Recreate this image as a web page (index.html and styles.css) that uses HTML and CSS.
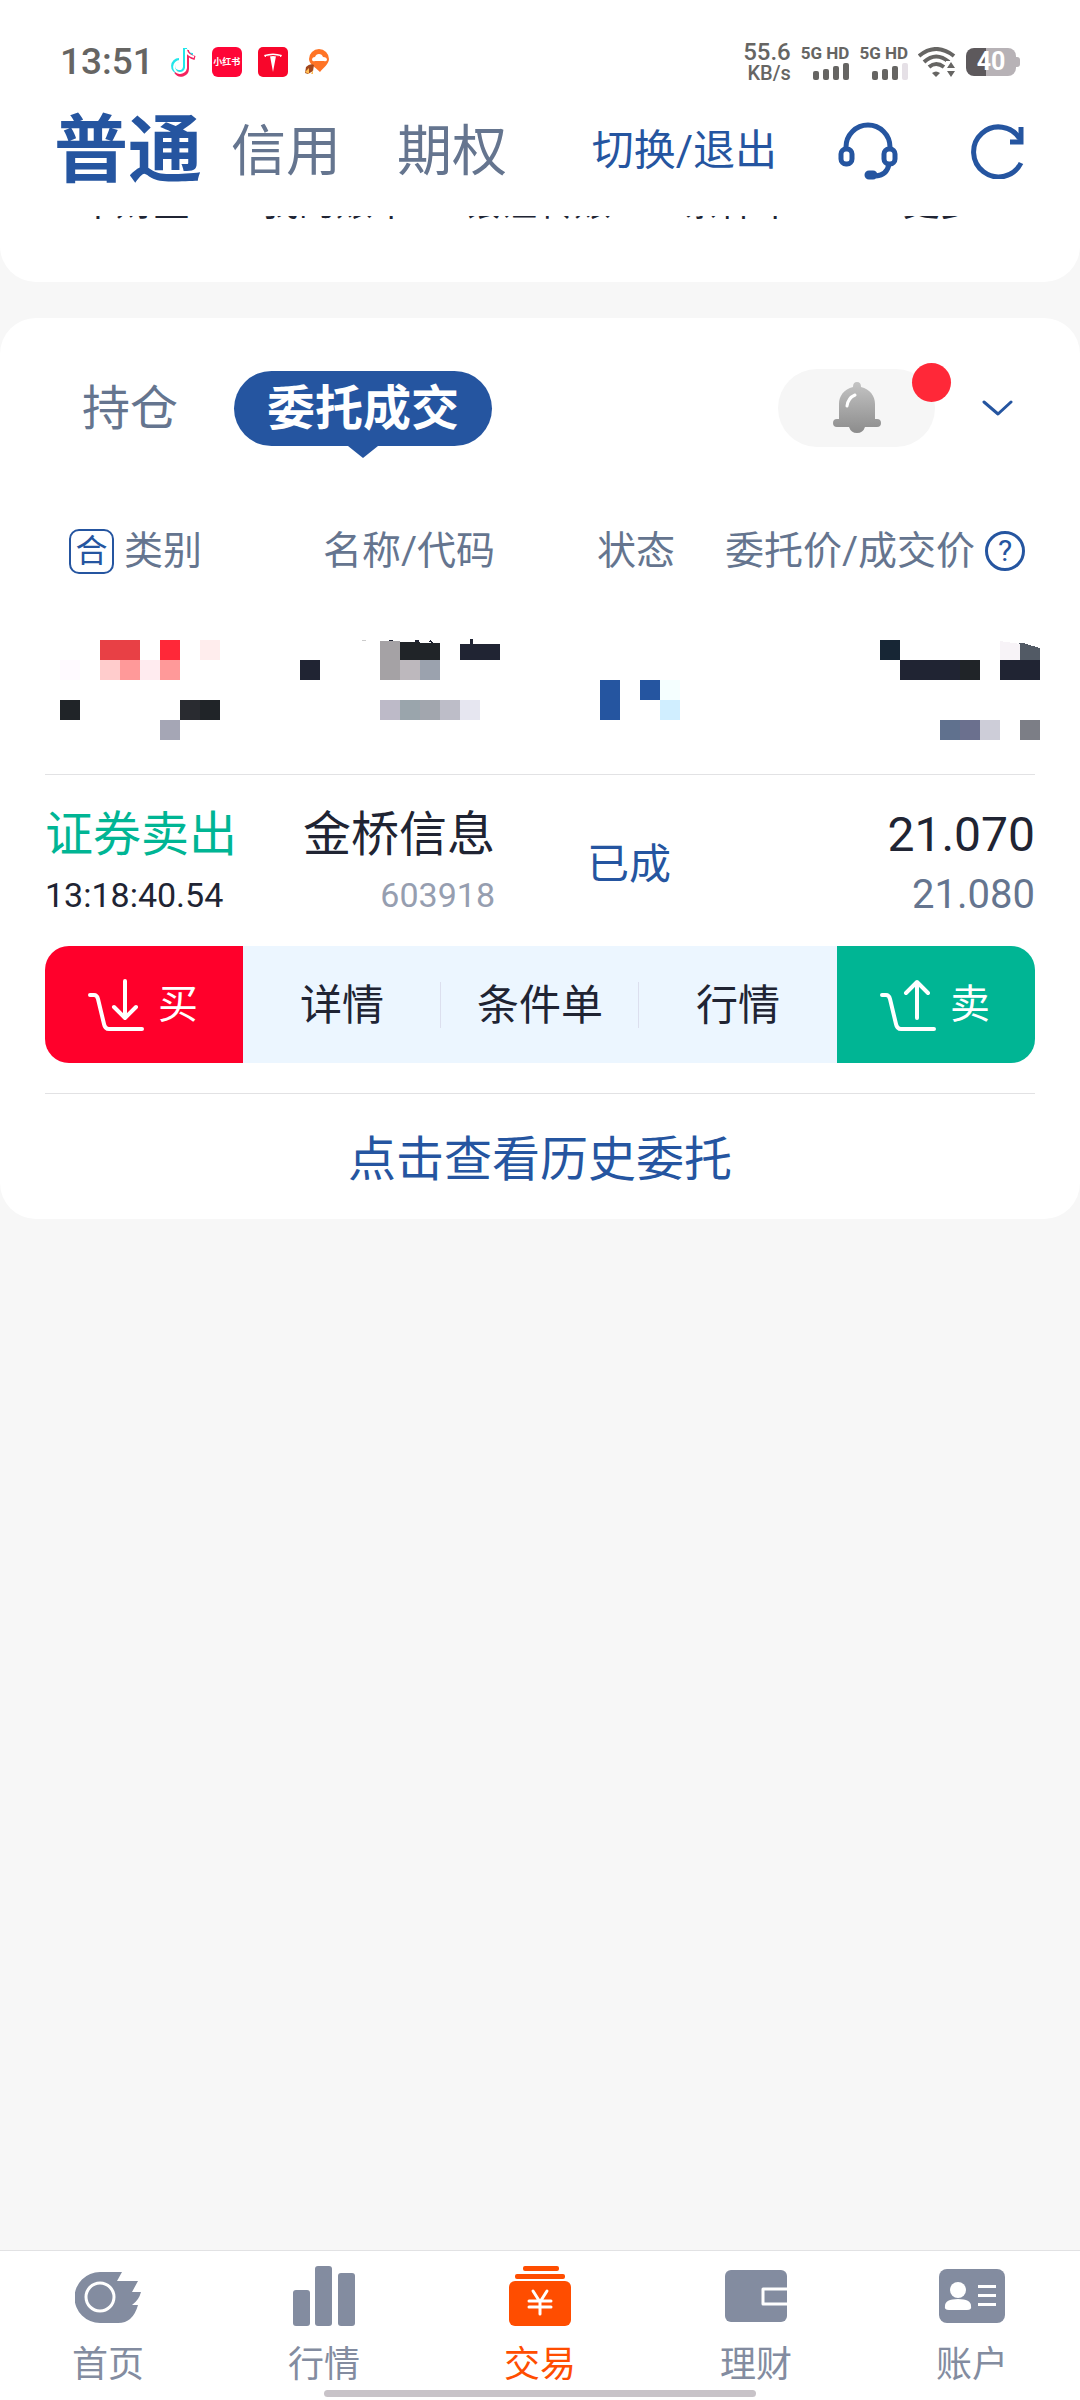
FILE: index.html
```html
<!DOCTYPE html>
<html lang="zh-CN">
<head>
<meta charset="utf-8">
<meta name="viewport" content="width=device-width, initial-scale=1">
<title>委托成交</title>
<link rel="stylesheet" href="styles.css">
</head>
<body>
<header class="top">
  <div class="status-bar">
    <span class="clock">13:51</span>
    <div class="apps">
      <svg class="app-note" viewBox="0 0 26 30" aria-hidden="true">
        <g fill="none" stroke-width="4">
          <path stroke="#22e6ea" d="M15 1v19a6 6 0 1 1-6-7M15 2c1 4 4 6 8 6"/>
          <path stroke="#f5225f" d="M17 3v19a6 6 0 0 1-11 3M17 4c1 4 4 6 8 7"/>
          <path stroke="#fff" stroke-width="2" d="M16 2v19a6 6 0 1 1-6-7M16 3c1 4 4 6 8 7"/>
        </g>
      </svg>
      <span class="app-red">小红书</span>
      <svg class="app-t" viewBox="0 0 30 30" aria-hidden="true">
        <rect width="30" height="30" rx="5" fill="#f8062b"/>
        <path fill="#fff" d="M6 8q9-3 18 0l-1 2-5-1-3 16-3-16-5 1z"/>
        <path d="M8 9.500q7-2 14 0" stroke="#f8062b" fill="none"/>
      </svg>
      <svg class="app-pin" viewBox="0 0 26 28" aria-hidden="true">
        <path fill="#ff7426" d="M15 1a10 10 0 0 1 10 10c0 5-6 9-9 13-5-5-11-8-11-13A10 10 0 0 1 15 1z"/>
        <path fill="#fff" d="M8 12q0-3 3-3 1-3 4-3t4 3q4 0 4 3-1 2-3 1H11q-2 1-3-1z"/>
        <path fill="#a2461c" d="M2 19q4-4 8-2l-1 6-5 3-3-1z"/>
        <path fill="#ffbd55" d="M1 24l4-4v6zM7 26l2-4v4z"/>
      </svg>
    </div>
    <div class="signals">
      <div class="speed"><span>55.6</span><span class="unit">KB/s</span></div>
      <div class="sim"><span>5G HD</span>
        <svg viewBox="0 0 36 17" aria-hidden="true"><g fill="#666563"><rect y="8" width="6" height="9" rx="2"/><rect x="10" y="6" width="6" height="11" rx="2"/><rect x="20" y="3" width="6" height="14" rx="2"/><rect x="30" width="6" height="17" rx="2"/></g></svg>
      </div>
      <div class="sim"><span>5G HD</span>
        <svg viewBox="0 0 36 17" aria-hidden="true"><g fill="#666563"><rect y="8" width="6" height="9" rx="2"/><rect x="10" y="6" width="6" height="11" rx="2"/><rect x="20" y="3" width="6" height="14" rx="2"/></g><rect x="30" width="6" height="17" rx="2" fill="#e5e0e6"/></svg>
      </div>
      <svg class="wifi" viewBox="0 0 38 30" aria-hidden="true">
        <g fill="none" stroke="#666563" stroke-width="4"><path d="M1 9q17-14 35 0"/><path d="M6 15q12-11 25 0"/><path d="M11 20q7-6 15 0"/></g>
        <path fill="#666563" d="M14 26q4-3 8 0l-4 4z"/>
        <path fill="#fff" d="M28 14h10v16H28z"/><path fill="#666563" d="M33 15l4 6h-8zM33 30l4-6h-8z"/>
      </svg>
      <div class="battery"><span>40</span></div>
    </div>
  </div>
  <nav class="account-nav">
    <div class="account-tabs">
      <button class="account-tab active" type="button">普通</button>
      <button class="account-tab" type="button">信用</button>
      <button class="account-tab" type="button">期权</button>
    </div>
    <div class="account-tools">
      <button class="switch" type="button">切换/退出</button>
      <button class="icon-btn" type="button" aria-label="客服">
        <svg width="60" height="58" viewBox="0 0 60 58" fill="none" stroke="#2555a0" stroke-width="5">
          <path d="M8 27v-2a22 22 0 0 1 44 0v2M51 42q-2 11-13 12"/>
          <rect x="3" y="27" width="11" height="15" rx="5"/><rect x="46" y="27" width="11" height="15" rx="5"/>
          <rect x="29" y="51" width="8" height="4" rx="2"/>
        </svg>
      </button>
      <button class="icon-btn refresh" type="button" aria-label="刷新">
        <svg width="55" height="55" viewBox="0 0 55 55" fill="none" stroke="#2555a0" stroke-width="5">
          <path d="M50 39A25 25 0 1 1 49 15"/><path d="M50 3v15H39"/>
        </svg>
      </button>
    </div>
  </nav>
</header>

<main class="content">
  <section class="shortcuts">
    <a href="#">牛财宝</a><a href="#">我的账单</a><a href="#">银证转账</a><a href="#">条件单</a><a href="#">更多</a>
  </section>

  <section class="orders">
    <div class="order-tabs">
      <button class="order-tab" type="button">持仓</button>
      <button class="order-tab active" type="button">委托成交</button>
      <button class="bell" type="button" aria-label="通知">
        <svg width="48" height="52" viewBox="0 0 48 52">
          <defs><linearGradient id="metal" x1="0" y1="0" x2="0" y2="1"><stop offset="0" stop-color="#c4c4c4"/><stop offset="1" stop-color="#8c8c8c"/></linearGradient></defs>
          <path fill="url(#metal)" d="M24 0q4 0 4 5c9 2 14 9 14 17v15h2q4 0 4 4t-4 4H32q-2 6-8 6t-8-6H4q-4 0-4-4t4-4h2V22C6 14 11 7 20 5q0-5 4-5z"/>
          <path d="M14 24q1-8 8-11" fill="none" stroke="#fff" stroke-width="3" stroke-linecap="round"/>
        </svg>
        <span class="dot"></span>
      </button>
      <button class="icon-btn" type="button" aria-label="展开">
        <svg width="31" height="18" viewBox="0 0 31 18" fill="none" stroke="#2555a0" stroke-width="3" stroke-linecap="round" stroke-linejoin="round"><path d="M2 3l14 12L29 3"/></svg>
      </button>
    </div>

    <table class="order-table">
      <colgroup><col class="c-kind"><col><col class="c-state"><col class="c-price"></colgroup>
      <thead>
        <tr>
          <th class="kind"><span class="head"><span class="merge">合</span>类别</span></th>
          <th>名称/代码</th>
          <th>状态</th>
          <th class="price"><span class="head">委托价/成交价<button class="help" type="button">?</button></span></th>
        </tr>
      </thead>
      <tbody>
        <tr class="masked">
          <td colspan="4">
            <svg viewBox="45 640 990 100" shape-rendering="crispEdges" aria-label="已隐藏的委托">
              <path fill="#e84045" d="M100 640h40v20h-40z"/><path fill="#ff2838" d="M160 640h20v20h-20z"/><path fill="#ffeded" d="M200 640h20v20h-20z"/>
              <path fill="#fffaff" d="M60 660h20v20H60z"/><path fill="#ffcccc" d="M100 660h20v20h-20z"/><path fill="#ff9999" d="M120 660h20v20h-20zM160 660h20v20h-20z"/><path fill="#ffebef" d="M140 660h20v20h-20z"/>
              <path fill="#202428" d="M60 700h20v20H60zM200 700h20v20h-20z"/><path fill="#292b30" d="M180 700h20v20h-20z"/><path fill="#a5a6b5" d="M160 720h20v20h-20z"/>
              <path fill="#202433" d="M300 660h20v20h-20zM460 644h40v16h-40zM470 639h3v5h-3zM415 640h4v3h-4zM389 640h4v1h-4zM428 642l2-2 4 3z"/>
              <path fill="#a5a2a5" d="M380 641h20v39h-20z"/><path fill="#202428" d="M400 642l40 1v17h-40z"/><path fill="#bdb8bd" d="M400 660h20v20h-20z"/><path fill="#9ba2ae" d="M420 660h20v20h-20z"/>
              <path fill="#ccc" d="M362 640h4v1h-4z"/>
              <path fill="#bdbac8" d="M380 700h20v20h-20z"/><path fill="#9aa5ac" d="M400 700h20v20h-20z"/><path fill="#a2a6ae" d="M420 700h20v20h-20z"/><path fill="#bdbdc8" d="M440 700h20v20h-20z"/><path fill="#e6e6f0" d="M460 700h20v20h-20z"/>
              <path fill="#2555a0" d="M600 680h20v40h-20zM640 680h20v20h-20z"/><path fill="#f5ffff" d="M660 680h20v20h-20z"/><path fill="#d0eeff" d="M660 700h20v20h-20z"/>
              <path fill="#172635" d="M880 640h20v20h-20z"/><path fill="#202433" d="M900 660h60v20h-60zM1000 660h40v20h-40z"/><path fill="#202428" d="M960 660h20v20h-20z"/>
              <path fill="#f7f3f7" d="M1000 641l20 3v16h-20z"/><path fill="#525a65" d="M1017 643h6l17 5v12h-20v-16z"/>
              <path fill="#60718e" d="M940 720h20v20h-20z"/><path fill="#6b708e" d="M960 720h20v20h-20z"/><path fill="#cdcdd8" d="M980 720h20v20h-20z"/><path fill="#7c7e86" d="M1020 720h20v20h-20z"/>
            </svg>
          </td>
        </tr>
        <tr class="order">
          <td class="kind"><div class="main sell-text">证券卖出</div><div class="sub">13:18:40.54</div></td>
          <td><div class="main">金桥信息</div><div class="sub code">603918</div></td>
          <td class="state">已成</td>
          <td><div class="main number">21.070</div><div class="sub deal">21.080</div></td>
        </tr>
        <tr class="order-actions">
          <td colspan="4">
            <div class="actions">
              <button class="buy" type="button">
                <svg width="56" height="52" viewBox="0 0 56 52"><path d="M2 16h4q3 0 4 4l6 25q1 5 5 5h33M37 2v37M26 28l11 11 11-11"/></svg>买</button>
              <button class="split" type="button">详情</button>
              <button class="split" type="button">条件单</button>
              <button type="button">行情</button>
              <button class="sell" type="button">
                <svg width="56" height="52" viewBox="0 0 56 52"><path d="M2 16h4q3 0 4 4l6 25q1 5 5 5h33M37 39V3M26 14L37 3l11 11"/></svg>卖</button>
            </div>
          </td>
        </tr>
      </tbody>
    </table>
    <a class="history" href="#">点击查看历史委托</a>
  </section>
</main>

<footer class="bottom">
  <nav class="tab-bar">
    <a href="#">
      <svg width="66" height="60" viewBox="0 0 66 60"><path fill="#838ca0" d="M25 6h22l-5 9h21l-6 11h9q-2 8-9 13h6q-5 18-20 18H25A25 25 0 0 1 25 6z"/><circle cx="25" cy="31" r="14" fill="none" stroke="#fff" stroke-width="3"/></svg>
      首页</a>
    <a href="#">
      <svg width="66" height="60" viewBox="0 0 66 60" fill="#838ca0"><rect x="2" y="24" width="17" height="36" rx="3"/><rect x="24" width="17" height="60" rx="3"/><rect x="47" y="7" width="17" height="53" rx="3"/></svg>
      行情</a>
    <a class="current" href="#">
      <svg width="66" height="60" viewBox="0 0 66 60" fill="#ff4d00"><rect x="16" width="36" height="5" rx="2"/><rect x="8" y="8" width="50" height="5" rx="2"/><rect x="2" y="15" width="62" height="45" rx="6"/><path fill="none" stroke="#fff" stroke-width="3" stroke-linecap="round" d="M26 25l7 11 7-11M22 35h22M22 41h22M33 36v12"/></svg>
      交易</a>
    <a href="#">
      <svg width="66" height="60" viewBox="0 0 66 60"><rect x="2" y="4" width="62" height="52" rx="6" fill="#838ca0"/><path fill="none" stroke="#fff" stroke-width="3" stroke-linejoin="round" d="M66 23H40v15h26"/></svg>
      理财</a>
    <a href="#">
      <svg width="66" height="60" viewBox="0 0 66 60"><rect y="3" width="66" height="54" rx="8" fill="#838ca0"/><g fill="#fff"><circle cx="19" cy="24" r="8"/><path d="M6 40q0-7 13-7t13 7q1 4-4 4H10q-5 0-4-4z"/><rect x="39" y="19" width="18" height="3"/><rect x="39" y="28" width="18" height="3"/><rect x="39" y="37" width="18" height="3"/></g></svg>
      账户</a>
  </nav>
  <div class="home-indicator"></div>
</footer>
</body>
</html>
```
FILE: styles.css
```css
* { box-sizing: border-box; }

body {
  margin: 0;
  min-height: 100vh;
  display: flex;
  flex-direction: column;
  background: #f7f7f7;
  color: #202433;
  font-family: Roboto, "Noto Sans CJK SC", sans-serif;
}

button {
  margin: 0;
  padding: 0;
  border: 0;
  background: none;
  color: inherit;
  font: inherit;
}

a { color: inherit; text-decoration: none; }
svg { display: block; }

/* Status bar */
.top { background: #fff; }

.status-bar {
  display: flex;
  align-items: center;
  height: 102px;
  padding: 22px 64px 0 60px;
  color: #666563;
}

.clock { font-size: 37px; font-weight: 500; line-height: 40px; }

.apps { display: flex; align-items: center; gap: 16px; margin-left: 16px; }
.app-note { width: 26px; height: 30px; }
.app-t { width: 30px; height: 30px; }
.app-pin { width: 26px; height: 28px; }
.app-red {
  width: 30px;
  border-radius: 6px;
  background: #ff0537;
  color: #fff;
  font-size: 9px;
  font-weight: 700;
  line-height: 30px;
  text-align: center;
}

.signals { display: flex; align-items: center; gap: 10px; margin-left: auto; font-weight: 500; }
.speed { display: flex; flex-direction: column; align-items: flex-end; font-size: 24px; line-height: 22px; }
.unit { font-size: 20px; line-height: 20px; }
.sim { display: flex; flex-direction: column; align-items: flex-end; gap: 2px; font-size: 17px; font-weight: 700; line-height: 16px; }
.sim svg { width: 36px; height: 17px; }
.wifi { width: 38px; height: 30px; }
.battery {
  position: relative;
  width: 50px;
  border-radius: 8px;
  background: linear-gradient(90deg, #5d595c 40%, #b7b2b6 40%);
  color: #fff;
  font-size: 25px;
  font-weight: 700;
  line-height: 28px;
  text-align: center;
}
.battery::after {
  content: "";
  position: absolute;
  top: 9px;
  right: -4px;
  width: 4px;
  height: 10px;
  border-radius: 0 3px 3px 0;
  background: #b7b2b6;
}

/* Account switcher */
.account-nav {
  display: flex;
  align-items: center;
  justify-content: space-between;
  height: 114px;
  padding: 0 54px 16px;
}
.account-tabs { display: flex; align-items: center; gap: 2px; }
.account-tab { padding: 0 27px; color: #65758f; font-size: 55px; line-height: 80px; }
.account-tab.active { padding: 0; color: #2555a0; font-size: 74px; font-weight: 700; }
.account-tools { display: flex; align-items: center; gap: 61px; }
.switch { color: #2555a0; font-size: 42px; line-height: 56px; }
.refresh { padding-left: 12px; }

/* Shortcuts, scrolled up under the header */
.content { flex: 1; }
.shortcuts {
  display: grid;
  grid-template-columns: repeat(5, 1fr);
  height: 66px;
  padding: 0 40px 0 34px;
  overflow: hidden;
  border-radius: 0 0 36px 36px;
  background: #fff;
  font-size: 37px;
  line-height: 40px;
  text-align: center;
}
.shortcuts a { margin-top: -32px; }

/* Orders card */
.orders {
  margin-top: 36px;
  padding: 51px 45px 31px;
  border-radius: 36px;
  background: #fff;
}
.order-tabs { display: flex; align-items: center; height: 78px; padding: 0 22px 0 37px; }
.order-tab { color: #65758f; font-size: 48px; line-height: 75px; }
.order-tab.active {
  position: relative;
  margin-left: 56px;
  padding: 0 33px;
  border-radius: 38px;
  background: #2555a0;
  color: #fff;
  font-weight: 700;
}
.order-tab.active::after {
  content: "";
  position: absolute;
  top: 100%;
  left: 50%;
  margin-left: -15px;
  border: 15px solid transparent;
  border-top: 12px solid #2555a0;
  border-bottom: 0;
}
.bell {
  position: relative;
  display: grid;
  place-items: center;
  width: 157px;
  height: 78px;
  margin: 0 47px 0 auto;
  border-radius: 39px;
  background: #f6f6f6;
}
.dot {
  position: absolute;
  top: -6px;
  right: -16px;
  width: 39px;
  height: 39px;
  border-radius: 50%;
  background: #ff2838;
}

.order-table { width: 100%; margin-top: 74px; border-collapse: collapse; table-layout: fixed; }
.c-kind { width: 225px; }
.c-state { width: 180px; }
.c-price { width: 360px; }
.order-table th, .order-table td { padding: 0; font-weight: 400; text-align: right; vertical-align: top; white-space: nowrap; }
.order-table th { height: 60px; color: #65758f; font-size: 39px; line-height: 60px; }
.order-table .kind { text-align: left; }
.order-table th.kind { padding-left: 24px; }
.order-table th.price { padding-right: 10px; }
.head { display: inline-flex; align-items: center; gap: 10px; vertical-align: top; }
.merge {
  width: 45px;
  border: 2px solid #2555a0;
  border-radius: 10px;
  color: #2555a0;
  font-size: 32px;
  line-height: 41px;
  text-align: center;
}
.help {
  width: 40px;
  height: 40px;
  border: 3px solid #2555a0;
  border-radius: 50%;
  color: #2555a0;
  font-size: 30px;
  line-height: 34px;
}

.order-table .masked td { padding: 59px 0 34px; border-bottom: 1px solid #e2e2e4; }
.masked svg { width: 100%; overflow: visible; }

.order-table .order td { padding-top: 32px; }
.main { font-size: 48px; line-height: 56px; }
.sub { margin-top: 4px; font-size: 34px; line-height: 56px; }
.sell-text { color: #00b594; }
.code { color: #969eb0; }
.deal { color: #65758f; font-size: 40px; }
.order-table .order .state { padding-right: 4px; color: #2555a0; font-size: 42px; line-height: 56px; vertical-align: middle; }

.order-table .order-actions td { padding: 23px 0 30px; border-bottom: 1px solid #e2e2e4; }
.actions {
  display: grid;
  grid-template-columns: repeat(5, 1fr);
  height: 117px;
  overflow: hidden;
  border-radius: 24px;
  background: #ecf6ff;
  font-size: 42px;
  line-height: 56px;
}
.actions button { padding-top: 3px; }
.actions .split { background: linear-gradient(#dcdfee, #dcdfee) right / 1px 46px no-repeat; }
.actions .buy, .actions .sell {
  display: flex;
  align-items: center;
  justify-content: center;
  gap: 14px;
  padding: 0 2px 0 0;
  color: #fff;
  font-size: 40px;
}
.actions .buy { background: #ff002b; }
.actions .sell { background: #00b594; }
.actions svg { fill: none; stroke: #fff; stroke-width: 4; stroke-linecap: round; stroke-linejoin: round; }

.history { display: block; padding-top: 38px; color: #2555a0; font-size: 48px; line-height: 56px; text-align: center; }

/* Bottom tab bar */
.bottom { padding: 15px 0 3px; border-top: 1px solid #e2e2e4; background: #fff; }
.tab-bar { display: grid; grid-template-columns: repeat(5, 1fr); }
.tab-bar a {
  display: flex;
  flex-direction: column;
  align-items: center;
  gap: 19px;
  color: #838ca0;
  font-size: 36px;
  line-height: 40px;
}
.tab-bar .current { color: #ff4d00; }
.home-indicator { width: 40%; height: 7px; margin: 5px auto 0; border-radius: 4px; background: #c8c3c8; }
```
